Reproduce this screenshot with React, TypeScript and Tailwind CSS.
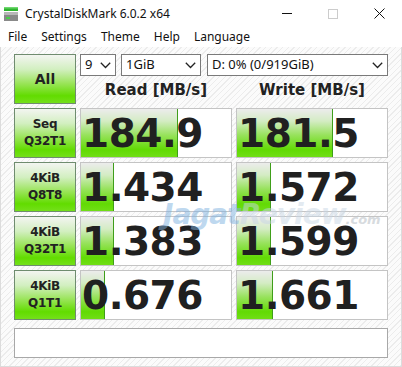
import React from "react";

const rows = [
  { top: "Seq", bottom: "Q32T1", read: "184.9", write: "181.5", readFill: 98, writeFill: 97 },
  { top: "4KiB", bottom: "Q8T8", read: "1.434", write: "1.572", readFill: 34, writeFill: 35 },
  { top: "4KiB", bottom: "Q32T1", read: "1.383", write: "1.599", readFill: 34, writeFill: 35 },
  { top: "4KiB", bottom: "Q1T1", read: "0.676", write: "1.661", readFill: 25, writeFill: 37 },
];

const greenBtn =
  "border border-[#6f8c6f] bg-[linear-gradient(to_bottom,#f3f5f1_0%,#d2efc0_30%,#98e456_60%,#62dc00_85%,#74e01a_100%)] flex flex-col items-center justify-center text-[#222] font-bold font-['DejaVu_Sans',sans-serif]";

function Chevron() {
  return (
    <svg width="11" height="7" viewBox="0 0 11 7" className="shrink-0">
      <path d="M0.8 0.8 L5.5 5.5 L10.2 0.8" fill="none" stroke="#222" strokeWidth="1.3" />
    </svg>
  );
}

function Select({ label, width }: { label: string; width: string }) {
  return (
    <div className={`${width} h-[22px] bg-white border border-[#7a7a7a] flex items-center justify-between pl-[4px] pr-[4px] text-[13px] text-[#111]`}>
      <span>{label}</span>
      <Chevron />
    </div>
  );
}

function Value({ text, fill }: { text: string; fill: number }) {
  return (
    <div className="relative w-[152px] h-[50px] bg-white border border-[#c4c4c4] overflow-hidden">
      <div
        className="absolute left-0 top-0 bottom-0 border-r border-[#3f9e1a] bg-[linear-gradient(to_bottom,#ececec_0%,#d4ecc4_25%,#96e25a_55%,#62da04_85%,#70de16_100%)]"
        style={{ width: fill - 1 }}
      />
      <div className="relative h-full flex items-center pl-[1px] text-[39px] leading-none tracking-[-0.5px] font-bold text-[#202020] font-['DejaVu_Sans',sans-serif]">
        {text}
      </div>
    </div>
  );
}

export default function App() {
  return (
    <div className="w-[402px] h-[367px] bg-white flex flex-col overflow-hidden relative font-['Noto_Sans','Open_Sans',sans-serif] text-[#111]">
      {/* title bar */}
      <div className="h-[27px] flex items-center shrink-0">
        <svg width="16" height="16" viewBox="0 0 16 16" className="ml-[3px]">
          <rect x="1" y="1" width="14" height="4" fill="#2fb52f" />
          <rect x="1" y="1" width="14" height="1.5" fill="#6fd86f" />
          <rect x="1" y="6" width="14" height="9" fill="#8a8a8a" />
          <rect x="1" y="6" width="14" height="3" fill="#b8b8b8" />
          <rect x="3" y="11" width="4" height="2" fill="#4ad04a" />
        </svg>
        <span className="ml-[6px] text-[12px]">CrystalDiskMark 6.0.2 x64</span>
        <div className="ml-auto flex items-center h-full">
          <div className="w-[46px] h-full flex items-center justify-center">
            <div className="w-[10px] h-px bg-[#111]" />
          </div>
          <div className="w-[46px] h-full flex items-center justify-center">
            <div className="w-[10px] h-[10px] border border-[#cccccc]" />
          </div>
          <div className="w-[46px] h-full flex items-center justify-center">
            <svg width="11" height="11" viewBox="0 0 11 11">
              <path d="M0.5 0.5 L10.5 10.5 M10.5 0.5 L0.5 10.5" stroke="#111" strokeWidth="1" />
            </svg>
          </div>
        </div>
      </div>

      {/* menu */}
      <div className="h-[20px] flex items-center gap-[14px] pl-[8px] text-[12px] shrink-0">
        <span>File</span>
        <span>Settings</span>
        <span>Theme</span>
        <span>Help</span>
        <span>Language</span>
      </div>

      {/* main area */}
      <div className="flex-1 border-x border-b border-[#dcdcdc] bg-[repeating-linear-gradient(135deg,#fbfbfb_0px,#fbfbfb_3px,#ececec_3px,#ececec_4px)] pt-[7px] px-[13px] flex flex-col gap-[4px]">
        <div className="flex gap-[4px] h-[50px]">
          <div className={`${greenBtn} w-[62px] h-[50px] text-[14px]`}>All</div>
          <div className="flex flex-col w-[308px]">
            <div className="flex gap-[5px]">
              <Select label="9" width="w-[36px]" />
              <Select label="1GiB" width="w-[80px]" />
              <Select label="D: 0% (0/919GiB)" width="w-[181px] ml-[1px]" />
            </div>
            <div className="flex-1 grid grid-cols-2 gap-[4px] items-center font-bold text-[15px] text-[#222] font-['DejaVu_Sans',sans-serif]">
              <div className="text-center">Read [MB/s]</div>
              <div className="text-center">Write [MB/s]</div>
            </div>
          </div>
        </div>

        {rows.map((r, i) => (
          <div key={i} className="flex gap-[4px] h-[50px]">
            <div className={`${greenBtn} w-[62px] h-[50px] text-[12px] leading-[17px] tracking-[-0.3px]`}>
              <span>{r.top}</span>
              <span>{r.bottom}</span>
            </div>
            <Value text={r.read} fill={r.readFill} />
            <Value text={r.write} fill={r.writeFill} />
          </div>
        ))}

        <div className="mt-[4px] h-[30px] bg-white border border-[#a8a8a8]" />
      </div>

      {/* watermark */}
      <div className="absolute left-[163px] top-[194px] flex items-baseline italic font-bold font-['DejaVu_Sans',sans-serif] pointer-events-none opacity-50">
        <span className="text-[28px] text-[#7fb2e0] tracking-[-1px]">Jagat</span>
        <span className="text-[28px] text-[#c8d6e4] tracking-[-1px]">Review</span>
        <span className="text-[13px] text-[#b0b8c0]">.com</span>
      </div>
    </div>
  );
}
